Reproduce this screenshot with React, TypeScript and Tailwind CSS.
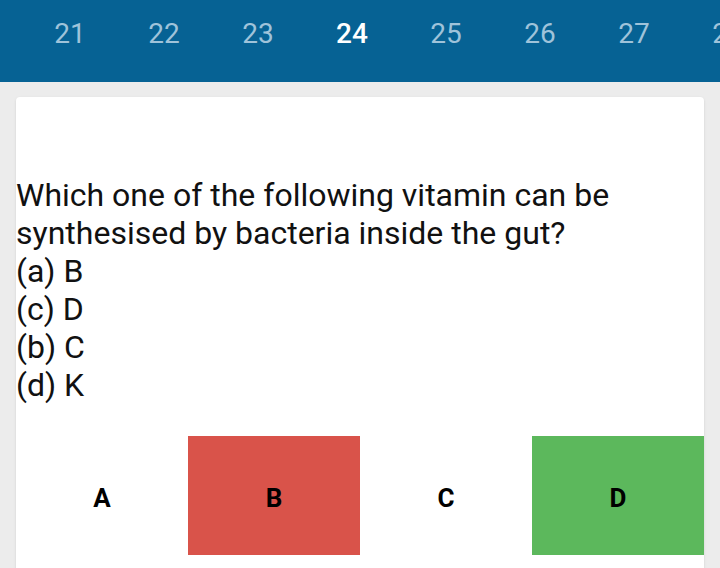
const days = [21, 22, 23, 24, 25, 26, 27, 28];

const options = [
  { label: 'A', bg: 'bg-white' },
  { label: 'B', bg: 'bg-[#d9534a]' },
  { label: 'C', bg: 'bg-white' },
  { label: 'D', bg: 'bg-[#5cb85c]' },
];

export default function App() {
  return (
    <div className="min-h-[568px] h-[568px] overflow-hidden bg-[#ececec] font-['Roboto',sans-serif]">
      {/* question number strip */}
      <div className="h-[82px] bg-[#066294] overflow-hidden">
        <div className="flex h-[67px] items-center pl-[23px] whitespace-nowrap">
          {days.map((d) => (
            <div
              key={d}
              className={`w-[94px] shrink-0 text-center text-[28px] leading-none ${
                d === 24 ? 'text-white font-medium' : 'text-[#9fc3da]'
              }`}
            >
              {d}
            </div>
          ))}
        </div>
      </div>

      <div className="mx-4 mt-[15px] bg-white rounded-sm shadow-sm pt-[79px]">
        <p className="text-[32px] leading-[38px] text-[#111]">
          Which one of the following vitamin can be synthesised by bacteria inside the gut?
          <br />
          (a) B
          <br />
          (c) D
          <br />
          (b) C
          <br />
          (d) K
        </p>

        <div className="grid grid-cols-4 mt-8">
          {options.map((o) => (
            <div
              key={o.label}
              className={`h-[119px] flex items-center justify-center pt-[5px] text-[26px] font-bold text-black ${o.bg}`}
            >
              {o.label}
            </div>
          ))}
        </div>
        <div className="h-10" />
      </div>
    </div>
  );
}
